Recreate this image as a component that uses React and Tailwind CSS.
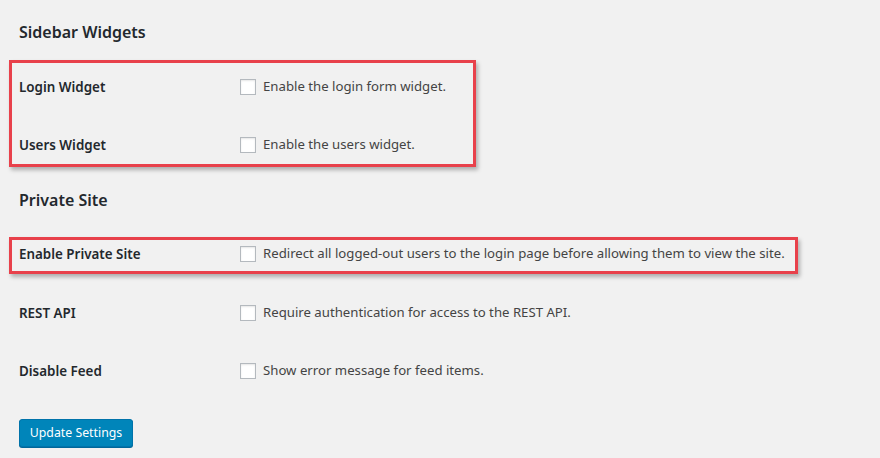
import React from 'react'

const Checkbox = () => (
    <span className="inline-block w-[16px] h-[16px] bg-white border border-[#b4b9be] shadow-[inset_0_1px_2px_rgba(0,0,0,0.1)] shrink-0" />
)

const Row = ({ label, desc }) => (
    <div className="flex items-center h-[18px] whitespace-nowrap">
        <div className="w-[221px] shrink-0 text-[13.4px] font-semibold text-[#23282d]">{label}</div>
        <label className="flex items-center gap-[7px] text-[13.2px] text-[#444]">
            <Checkbox />
            <span>{desc}</span>
        </label>
    </div>
)

const Highlight = ({ width, className, children }) => (
    <div className={`-ml-[10px] pl-[7px] border-[3px] border-[#e8414b] shadow-[2px_3px_4px_rgba(0,0,0,0.28)] ${width} ${className}`}>
        {children}
    </div>
)

export default function App() {
    return (
        <div className="min-h-[458px] w-[880px] bg-[#f1f1f1] pl-[19px] pt-[20px] font-['Noto_Sans',sans-serif]">
            <h2 className="h-[24px] leading-[24px] text-[16px] font-semibold text-[#23282d]">Sidebar Widgets</h2>

            <Highlight width="w-[467px]" className="mt-[16px] pt-[15px] pb-[10px]">
                <div className="flex flex-col gap-[40px]">
                    <Row label="Login Widget" desc="Enable the login form widget." />
                    <Row label="Users Widget" desc="Enable the users widget." />
                </div>
            </Highlight>

            <h2 className="mt-[21px] h-[24px] leading-[24px] text-[16px] font-semibold text-[#23282d]">Private Site</h2>

            <Highlight width="w-[789px]" className="mt-[25px] pt-[5px] pb-[8px]">
                <Row label="Enable Private Site" desc="Redirect all logged-out users to the login page before allowing them to view the site." />
            </Highlight>

            <div className="mt-[30px] flex flex-col gap-[40px]">
                <Row label="REST API" desc="Require authentication for access to the REST API." />
                <Row label="Disable Feed" desc="Show error message for feed items." />
            </div>

            <button className="mt-[39px] h-[28px] w-[114px] rounded-[3px] bg-[#0085ba] border border-[#0073aa] text-white text-[12.3px] shadow-[0_1px_0_#006799]">
                Update Settings
            </button>
        </div>
    )
}
